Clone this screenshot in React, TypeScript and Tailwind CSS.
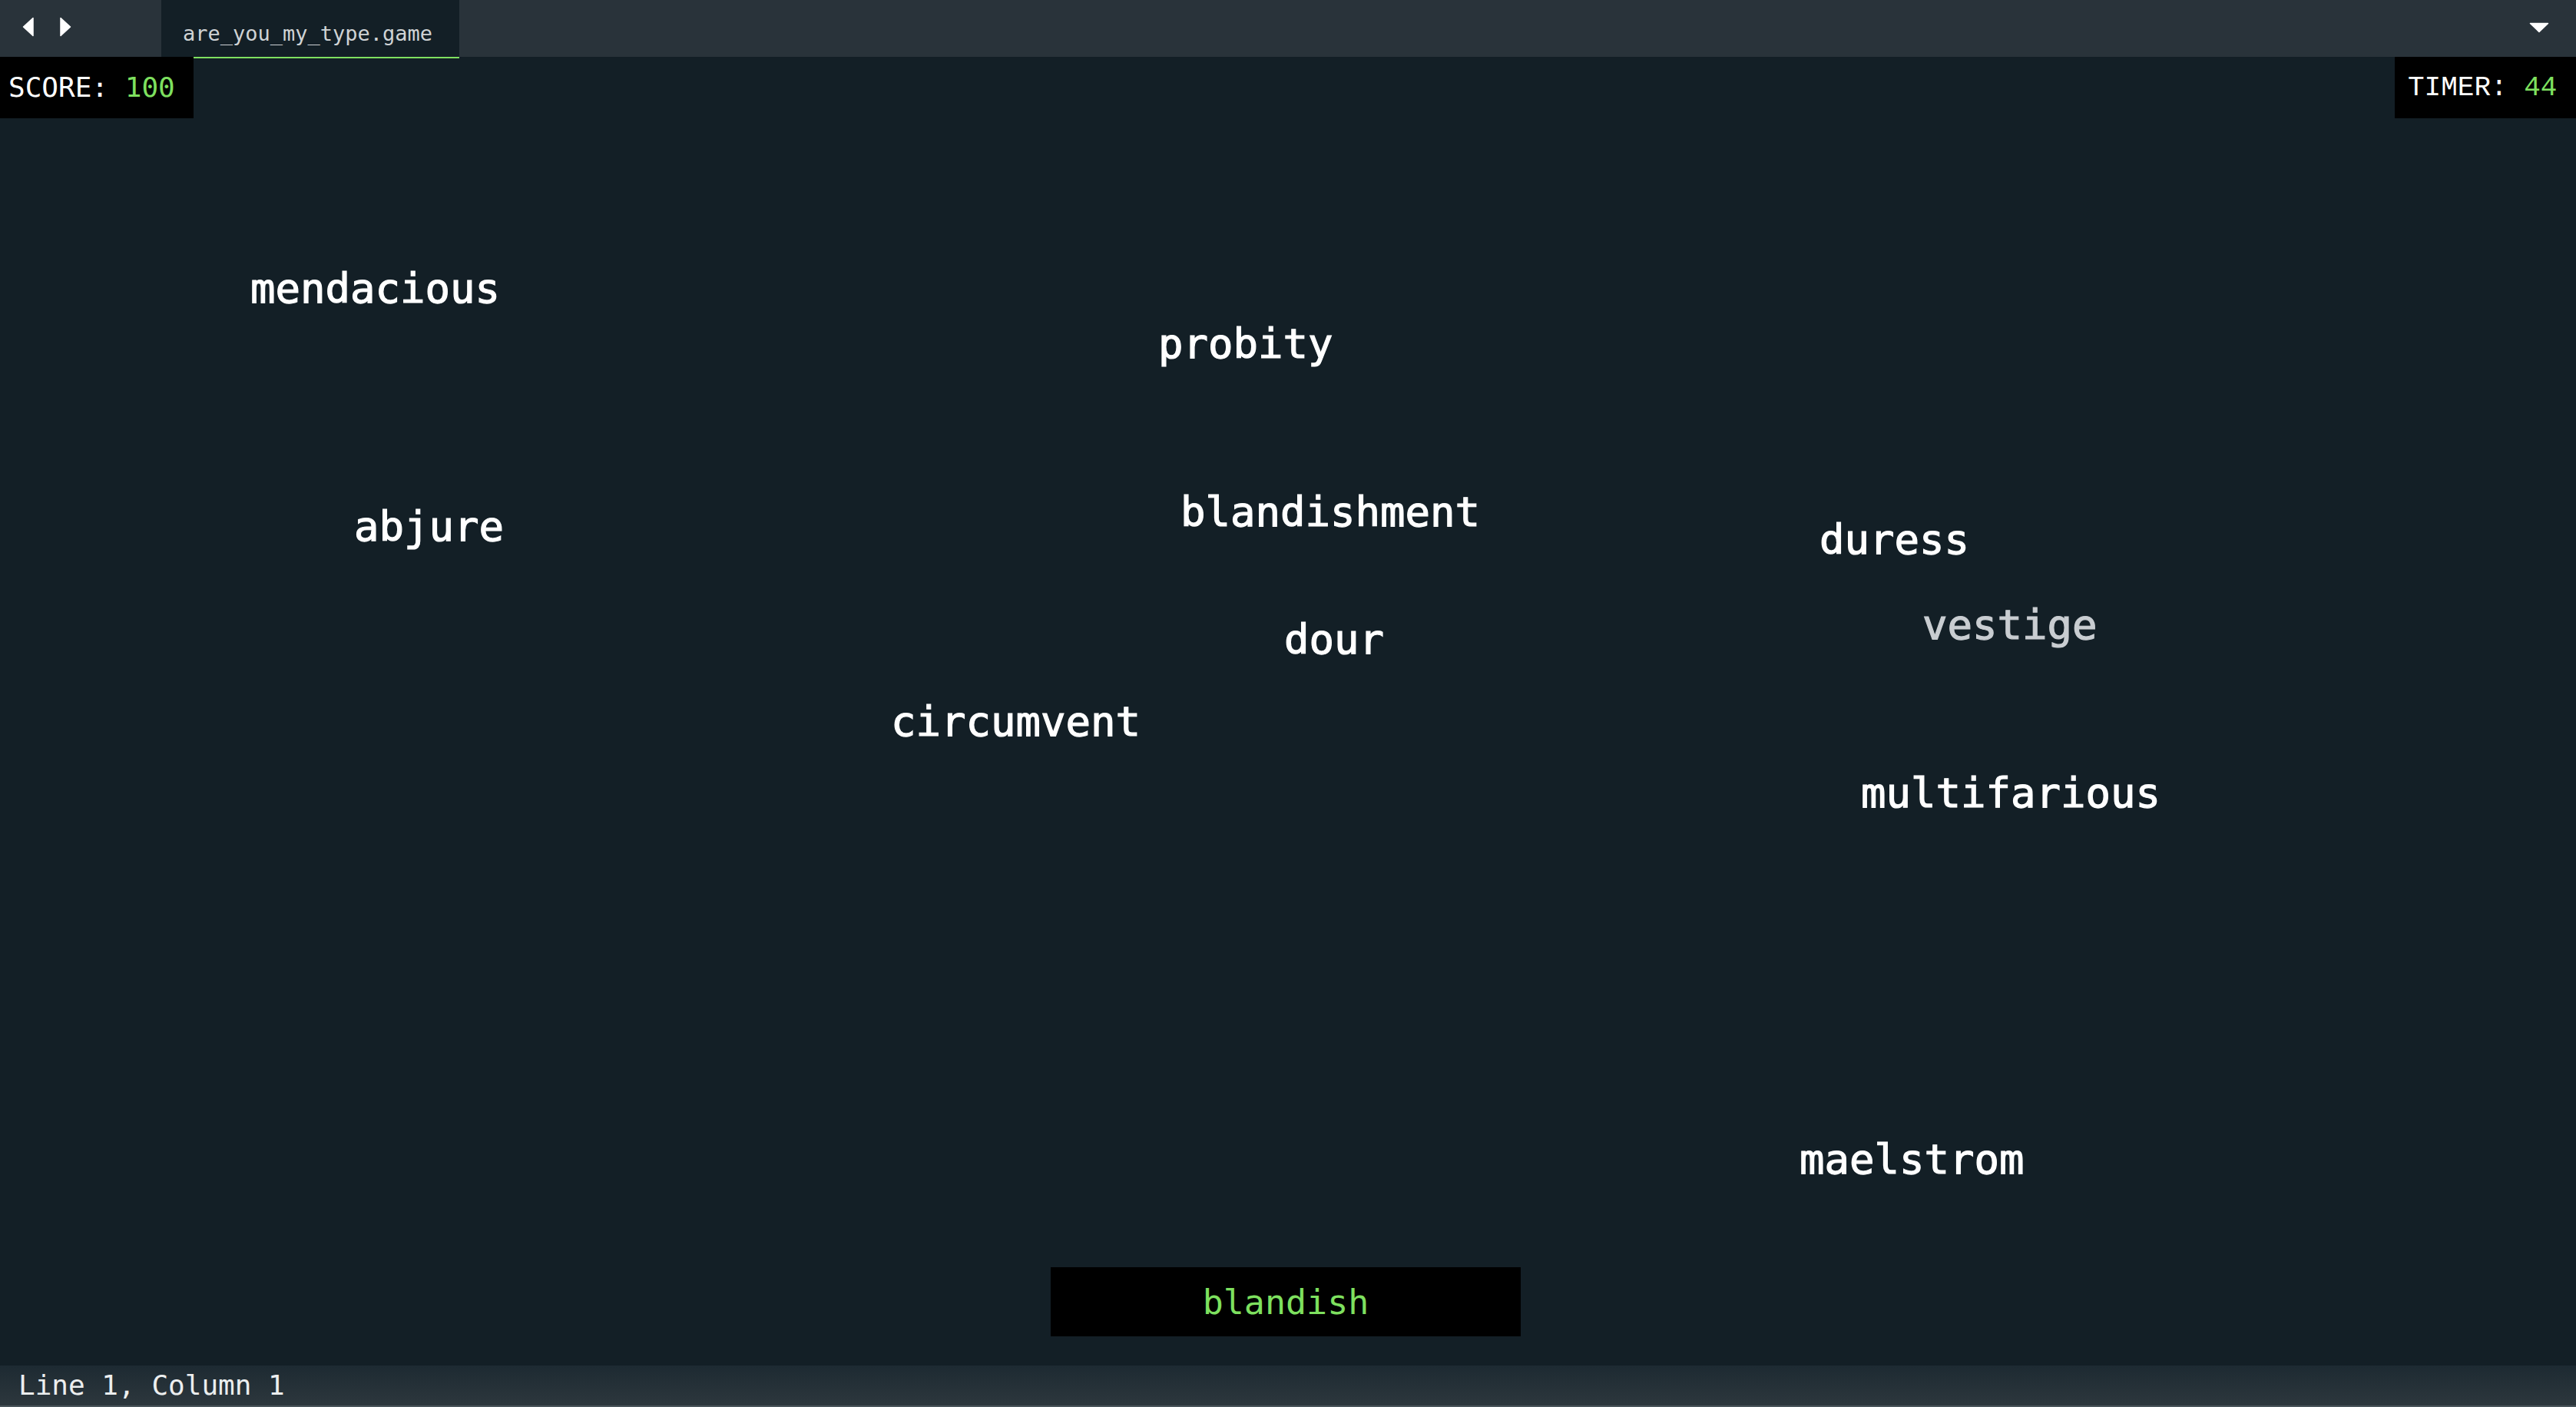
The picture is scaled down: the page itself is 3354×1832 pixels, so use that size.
import React from "react";

const mono = { fontFamily: '"DejaVu Sans Mono", "Liberation Mono", monospace' };

type Word = { text: string; left: number; top: number; dim?: boolean };

const words: Word[] = [
  { text: "mendacious", left: 326, top: 275 },
  { text: "probity", left: 1508, top: 347 },
  { text: "abjure", left: 461, top: 585 },
  { text: "blandishment", left: 1537, top: 566 },
  { text: "duress", left: 2369, top: 602 },
  { text: "vestige", left: 2503, top: 713, dim: true },
  { text: "dour", left: 1672, top: 732 },
  { text: "circumvent", left: 1160, top: 839 },
  { text: "multifarious", left: 2423, top: 932 },
  { text: "maelstrom", left: 2343, top: 1409 },
];

function TopBar() {
  return (
    <div className="flex h-[74px] shrink-0 items-stretch bg-[#29333a]">
      {/* nav arrows */}
      <div className="flex w-[210px] items-start gap-[34px] pl-[29px] pt-[22px]">
        <svg width="15" height="26" viewBox="0 0 15 26">
          <path d="M14 1.5 L14 24.5 L1.5 13 Z" fill="#fff" stroke="#fff" strokeWidth="1.5" strokeLinejoin="round" />
        </svg>
        <svg width="15" height="26" viewBox="0 0 15 26">
          <path d="M1 1.5 L1 24.5 L13.5 13 Z" fill="#fff" stroke="#fff" strokeWidth="1.5" strokeLinejoin="round" />
        </svg>
      </div>

      {/* tab */}
      <div className="flex h-[76px] w-[388px] items-center border-b-2 border-[#7ee05f] bg-[#131f26] pl-[28px] pt-[12px]">
        <span className="text-[27px] leading-none text-[#cfd3d5]" style={mono}>
          are_you_my_type.game
        </span>
      </div>

      <div className="flex-1" />

      {/* dropdown */}
      <div className="flex items-start pr-[35px] pt-[29px]">
        <svg width="26" height="14" viewBox="0 0 26 14">
          <path d="M1.5 1.5 L24.5 1.5 L13 12.5 Z" fill="#fff" stroke="#fff" strokeWidth="1.5" strokeLinejoin="round" />
        </svg>
      </div>
    </div>
  );
}

export default function App() {
  return (
    <div className="flex h-screen w-full flex-col overflow-hidden bg-[#131f26]">
      <TopBar />

      {/* Game area */}
      <div className="relative flex flex-1 flex-col justify-end pb-[38px]">
        {/* Score */}
        <div className="absolute left-0 top-0 z-10 flex h-[80px] w-[252px] items-center bg-black pl-[11px]">
          <span className="text-[36px] leading-none text-white" style={mono}>
            SCORE: <span className="text-[#7ee05f]">100</span>
          </span>
        </div>

        {/* Timer */}
        <div className="absolute right-0 top-0 z-10 flex h-[80px] w-[236px] items-center bg-black pl-[17px] pt-[2px]">
          <span
            className="text-[36px] leading-none text-white"
            style={{ fontFamily: '"Liberation Mono", "DejaVu Sans Mono", monospace' }}
          >
            TIMER: <span className="text-[#7ee05f]">44</span>
          </span>
        </div>

        {/* Falling words */}
        {words.map((w) => (
          <span
            key={w.text}
            className={`absolute whitespace-nowrap text-[54px] leading-none [-webkit-text-stroke:1.2px_currentColor] ${
              w.dim ? "text-[#c9cdd1]" : "text-white"
            }`}
            style={{ ...mono, left: w.left, top: w.top }}
          >
            {w.text}
          </span>
        ))}

        {/* Input */}
        <div className="mx-auto flex h-[90px] w-[612px] -translate-x-[3px] items-center justify-center bg-black">
          <span className="text-[45px] leading-none text-[#7ee05f]" style={mono}>
            blandish
          </span>
        </div>
      </div>

      {/* Status bar */}
      <div className="flex h-[54px] shrink-0 items-center border-b-2 border-[#4a555b] bg-gradient-to-b from-[#1d2a32] to-[#2d373d] pl-[24px]">
        <span className="text-[36px] leading-none text-[#eceeef]" style={mono}>
          Line 1, Column 1
        </span>
      </div>
    </div>
  );
}
